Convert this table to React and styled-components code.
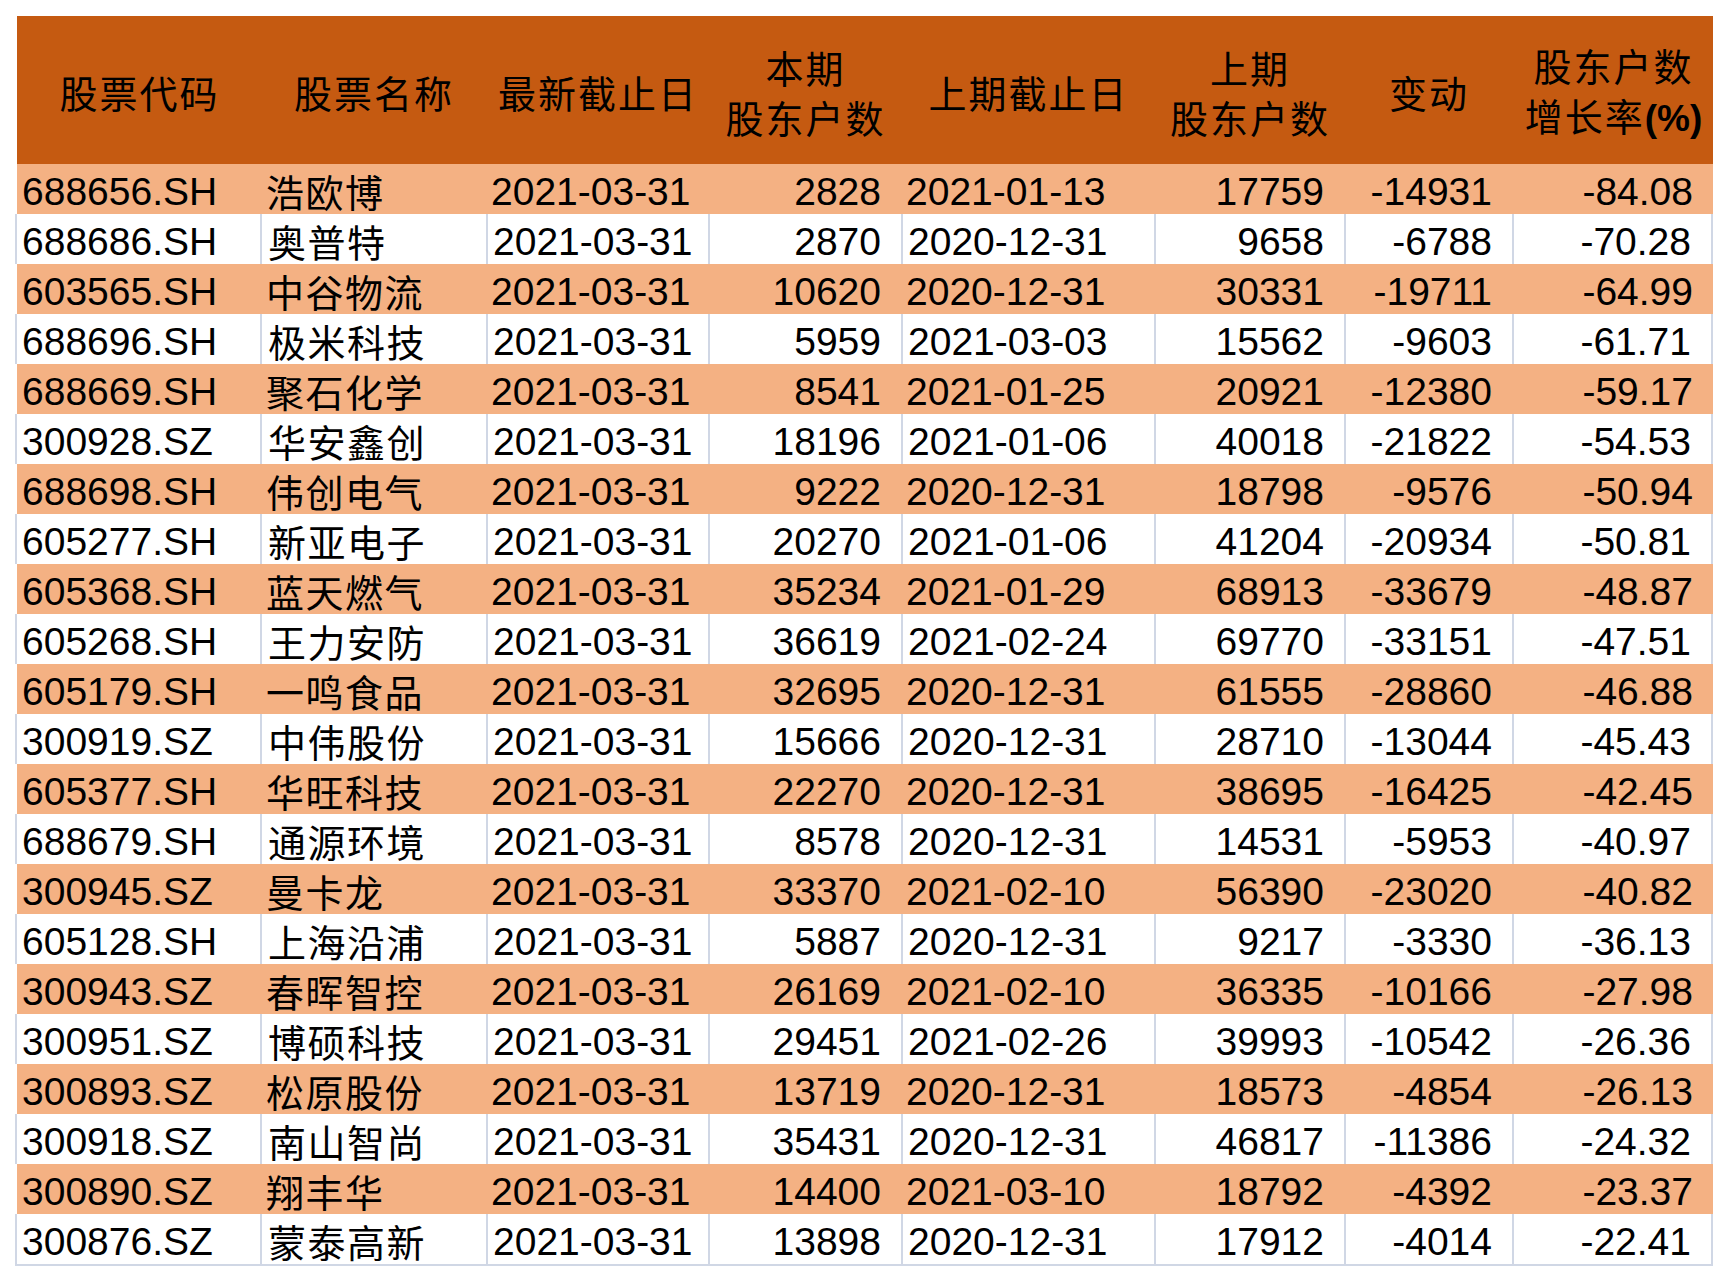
import React from "react";
import styled, { createGlobalStyle } from "styled-components";

const GlobalStyle = createGlobalStyle`
  body {
    margin: 0;
    background: #ffffff;
    font-family: "Liberation Sans", "Noto Sans CJK SC", sans-serif;
  }
`;

const COLUMNS = "243px 226px 222px 193px 253px 190px 168px 201px";
const GRID = "#d0d7e5";

const Page = styled.div`
  padding: 16px 0 0 17px;
  width: 1696px;
`;

const HeaderRow = styled.div`
  display: grid;
  grid-template-columns: ${COLUMNS};
  height: 148px;
  background: #c55a11;
`;

const HeadCell = styled.div`
  display: flex;
  align-items: center;
  justify-content: center;
  padding-top: 3px;
  box-sizing: border-box;
`;

const HeadText = styled.div`
  text-align: center;
  white-space: nowrap;
  font-family: "Noto Sans CJK SC", sans-serif;
  font-size: 38px;
  line-height: 50px;
  letter-spacing: 2px;
  padding-left: 2px;
  color: #000;
`;

const Pct = styled.span`
  font-family: "Liberation Sans", sans-serif;
  font-weight: bold;
  font-size: 37px;
  letter-spacing: 0;
`;

const Row = styled.div`
  display: grid;
  grid-template-columns: ${COLUMNS};
  height: 50px;
  background: ${props => (props.$shade ? "#f4b183" : "#ffffff")};
  box-shadow: ${props => (props.$shade ? "none" : `-2px 0 0 ${GRID}`)};
  border-bottom: ${props => (props.$last ? `2px solid ${GRID}` : "none")};
`;

const Cell = styled.div`
  box-sizing: border-box;
  height: 50px;
  overflow: hidden;
  white-space: nowrap;
  font-size: ${props => (props.$cjk ? "38px" : "39px")};
  letter-spacing: ${props => (props.$cjk ? "1.5px" : "0")};
  line-height: 44px;
  color: #000;
  text-align: ${props => (props.$right ? "right" : "left")};
  padding: ${props => (props.$cjk ? "8px" : "6px")}
    ${props => (props.$right ? "20px" : "0")} 0
    ${props => (props.$cjk ? "6px" : "5px")};
  border-left: ${props =>
    props.$shade || props.$first ? "none" : `2px solid ${GRID}`};
  border-right: ${props =>
    !props.$shade && props.$end ? `2px solid ${GRID}` : "none"};
`;

const headers = [
  ["股票代码"],
  ["股票名称"],
  ["最新截止日"],
  ["本期", "股东户数"],
  ["上期截止日"],
  ["上期", "股东户数"],
  ["变动"],
  ["股东户数", "增长率"],
];

const rows = [
  ["688656.SH", "浩欧博", "2021-03-31", "2828", "2021-01-13", "17759", "-14931", "-84.08"],
  ["688686.SH", "奥普特", "2021-03-31", "2870", "2020-12-31", "9658", "-6788", "-70.28"],
  ["603565.SH", "中谷物流", "2021-03-31", "10620", "2020-12-31", "30331", "-19711", "-64.99"],
  ["688696.SH", "极米科技", "2021-03-31", "5959", "2021-03-03", "15562", "-9603", "-61.71"],
  ["688669.SH", "聚石化学", "2021-03-31", "8541", "2021-01-25", "20921", "-12380", "-59.17"],
  ["300928.SZ", "华安鑫创", "2021-03-31", "18196", "2021-01-06", "40018", "-21822", "-54.53"],
  ["688698.SH", "伟创电气", "2021-03-31", "9222", "2020-12-31", "18798", "-9576", "-50.94"],
  ["605277.SH", "新亚电子", "2021-03-31", "20270", "2021-01-06", "41204", "-20934", "-50.81"],
  ["605368.SH", "蓝天燃气", "2021-03-31", "35234", "2021-01-29", "68913", "-33679", "-48.87"],
  ["605268.SH", "王力安防", "2021-03-31", "36619", "2021-02-24", "69770", "-33151", "-47.51"],
  ["605179.SH", "一鸣食品", "2021-03-31", "32695", "2020-12-31", "61555", "-28860", "-46.88"],
  ["300919.SZ", "中伟股份", "2021-03-31", "15666", "2020-12-31", "28710", "-13044", "-45.43"],
  ["605377.SH", "华旺科技", "2021-03-31", "22270", "2020-12-31", "38695", "-16425", "-42.45"],
  ["688679.SH", "通源环境", "2021-03-31", "8578", "2020-12-31", "14531", "-5953", "-40.97"],
  ["300945.SZ", "曼卡龙", "2021-03-31", "33370", "2021-02-10", "56390", "-23020", "-40.82"],
  ["605128.SH", "上海沿浦", "2021-03-31", "5887", "2020-12-31", "9217", "-3330", "-36.13"],
  ["300943.SZ", "春晖智控", "2021-03-31", "26169", "2021-02-10", "36335", "-10166", "-27.98"],
  ["300951.SZ", "博硕科技", "2021-03-31", "29451", "2021-02-26", "39993", "-10542", "-26.36"],
  ["300893.SZ", "松原股份", "2021-03-31", "13719", "2020-12-31", "18573", "-4854", "-26.13"],
  ["300918.SZ", "南山智尚", "2021-03-31", "35431", "2020-12-31", "46817", "-11386", "-24.32"],
  ["300890.SZ", "翔丰华", "2021-03-31", "14400", "2021-03-10", "18792", "-4392", "-23.37"],
  ["300876.SZ", "蒙泰高新", "2021-03-31", "13898", "2020-12-31", "17912", "-4014", "-22.41"],
];

// columns holding numbers are right aligned
const rightCols = [3, 5, 6, 7];

export default function App() {
  return (
    <Page>
      <GlobalStyle />
      <HeaderRow>
        {headers.map((lines, c) => (
          <HeadCell key={c}>
            <HeadText>
              {lines.map((line, l) => (
                <div key={l}>
                  {line}
                  {c === 7 && l === 1 && <Pct>(%)</Pct>}
                </div>
              ))}
            </HeadText>
          </HeadCell>
        ))}
      </HeaderRow>
      {rows.map((row, i) => {
        const shade = i % 2 === 0;
        return (
          <Row key={row[0]} $shade={shade} $last={i === rows.length - 1}>
            {row.map((value, c) => (
              <Cell
                key={c}
                $shade={shade}
                $first={c === 0}
                $end={c === row.length - 1}
                $cjk={c === 1}
                $right={rightCols.includes(c)}
              >
                {value}
              </Cell>
            ))}
          </Row>
        );
      })}
    </Page>
  );
}
